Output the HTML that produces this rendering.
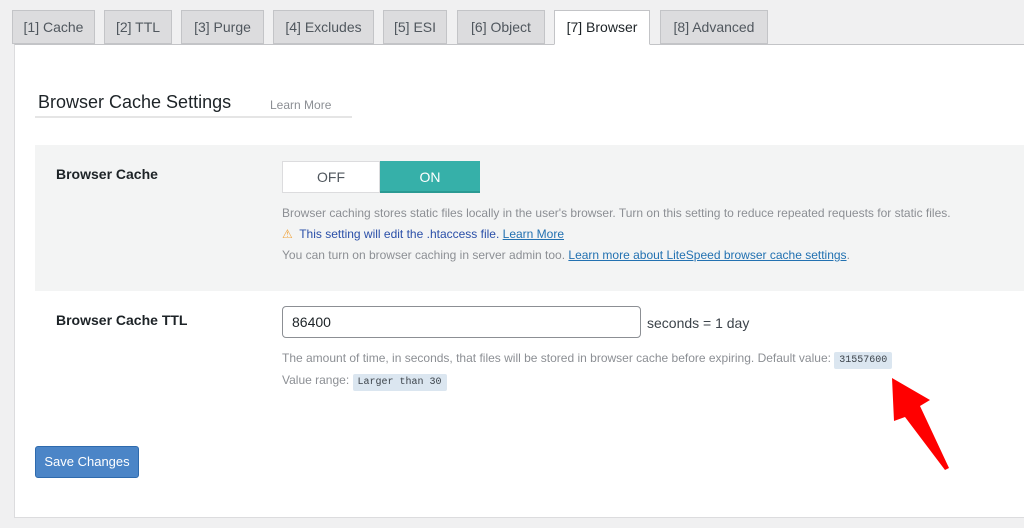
<!DOCTYPE html>
<html><head><meta charset="utf-8"><style>
body{margin:0;width:1024px;height:528px;background:#f0f0f1;font-family:"Liberation Sans",sans-serif;position:relative;overflow:hidden;color:#1d2327}
.tab{position:absolute;top:10px;height:34px;background:#dcdcde;border:1px solid #c3c4c7;box-sizing:border-box;font-size:14px;line-height:33px;text-align:center;color:#50575e}
.tab.act{background:#fff;border-bottom-color:#fff;color:#1d2327;height:35px}
.panel{position:absolute;left:14px;top:44px;width:1010px;height:474px;background:#fff;border-top:1px solid #c3c4c7;border-left:1px solid #dcdcde;border-bottom:1px solid #dcdcde;box-sizing:border-box}
.a{position:absolute;white-space:nowrap}
.desc{font-size:12px;color:#8c8f94}
code{font-family:"Liberation Mono",monospace;font-size:10px;background:#dbe6f0;color:#3c434a;padding:3px 5px;border-radius:2px}
a{color:#2271b1;text-decoration:underline}
</style></head><body>
<div class="panel"></div>
<div class="tab" style="left:12px;width:83px">[1] Cache</div>
<div class="tab" style="left:104px;width:68px">[2] TTL</div>
<div class="tab" style="left:181px;width:83px">[3] Purge</div>
<div class="tab" style="left:273px;width:101px">[4] Excludes</div>
<div class="tab" style="left:383px;width:64px">[5] ESI</div>
<div class="tab" style="left:457px;width:88px">[6] Object</div>
<div class="tab act" style="left:554px;width:96px">[7] Browser</div>
<div class="tab" style="left:660px;width:108px">[8] Advanced</div>

<div class="a" style="left:38px;top:92px;font-size:18px;color:#1d2327">Browser Cache Settings</div>
<div class="a" style="left:270px;top:98px;font-size:12px;color:#8c8f94">Learn More</div>
<div class="a" style="left:35px;top:116px;width:317px;height:2px;background:#e5e5e5"></div>

<div class="a" style="left:35px;top:145px;width:989px;height:146px;background:#f3f4f4"></div>
<div class="a" style="left:56px;top:166px;font-size:14px;font-weight:bold;color:#1d2327">Browser Cache</div>
<div class="a" style="left:282px;top:161px;width:98px;height:32px;background:#fff;border:1px solid #dcdcde;box-sizing:border-box;text-align:center;line-height:30px;font-size:14px;color:#50575e">OFF</div>
<div class="a" style="left:380px;top:161px;width:100px;height:32px;background:#36b0a9;border-bottom:2px solid #2a9a93;box-sizing:border-box;text-align:center;line-height:32px;font-size:14px;color:#fff">ON</div>
<div class="a desc" style="left:282px;top:206px">Browser caching stores static files locally in the user's browser. Turn on this setting to reduce repeated requests for static files.</div>
<div class="a" style="left:282px;top:227px;font-size:12px;color:#2a4fa8"><span style="color:#f0a33b">⚠</span>&nbsp; This setting will edit the .htaccess file. <a>Learn More</a></div>
<div class="a desc" style="left:282px;top:248px">You can turn on browser caching in server admin too. <a>Learn more about LiteSpeed browser cache settings</a>.</div>

<div class="a" style="left:56px;top:312px;font-size:14px;font-weight:bold">Browser Cache TTL</div>
<div class="a" style="left:282px;top:306px;width:359px;height:32px;border:1px solid #8c8f94;border-radius:4px;box-sizing:border-box;font-size:14px;line-height:30px;padding-left:9px;background:#fff">86400</div>
<div class="a" style="left:647px;top:315px;font-size:14px;color:#3c434a">seconds = 1 day</div>
<div class="a desc" style="left:282px;top:351px">The amount of time, in seconds, that files will be stored in browser cache before expiring. Default value: <code>31557600</code></div>
<div class="a desc" style="left:282px;top:373px">Value range: <code>Larger than 30</code></div>

<svg class="a" style="left:0;top:0" width="1024" height="528"><polygon points="892,378 930,400 920,406 949,468 945,470 905,417 894,421" fill="#f00"/></svg>

<div class="a" style="left:35px;top:446px;width:104px;height:32px;background:#4b85c7;border:1px solid #2e6aad;border-radius:3px;box-sizing:border-box;color:#fff;font-size:13px;line-height:30px;text-align:center">Save Changes</div>
</body></html>
